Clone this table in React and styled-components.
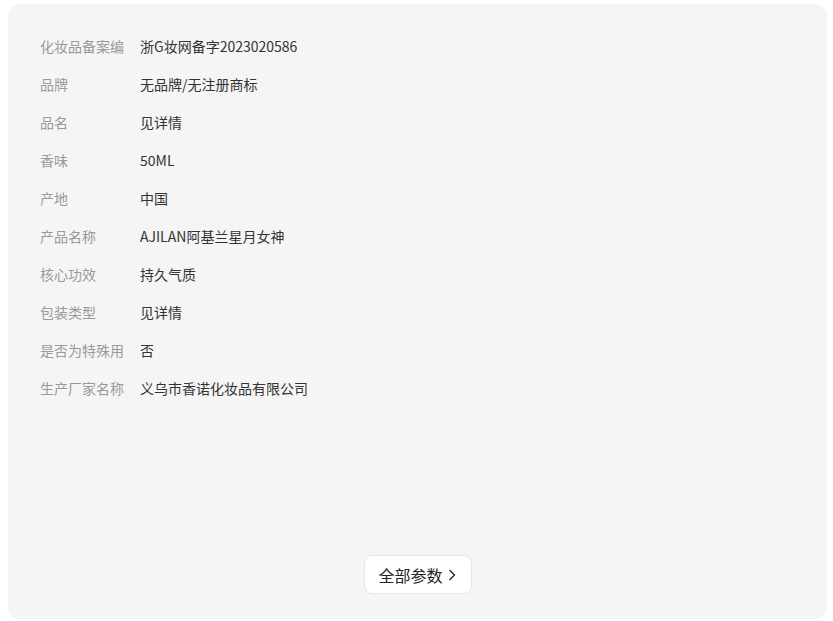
import styled, { createGlobalStyle } from "styled-components";

const GlobalStyle = createGlobalStyle`
  html, body {
    margin: 0;
    padding: 0;
    background: #ffffff;
    font-family: "Noto Sans CJK SC", "Noto Sans", sans-serif;
  }
`;

const params = [
  ["化妆品备案编", "浙G妆网备字2023020586"],
  ["品牌", "无品牌/无注册商标"],
  ["品名", "见详情"],
  ["香味", "50ML"],
  ["产地", "中国"],
  ["产品名称", "AJILAN阿基兰星月女神"],
  ["核心功效", "持久气质"],
  ["包装类型", "见详情"],
  ["是否为特殊用", "否"],
  ["生产厂家名称", "义乌市香诺化妆品有限公司"],
];

const App = () => {
  return (
    <>
      <GlobalStyle />
      <Panel>
        <ParamList>
          {params.map(([label, value]) => (
            <ParamRow key={label}>
              <Label>{label}</Label>
              <Value>{value}</Value>
            </ParamRow>
          ))}
        </ParamList>
        <Footer>
          <MoreButton>
            全部参数
            <svg width="12" height="14" viewBox="0 0 12 14" fill="none">
              <path d="M3.5 2 L8.5 7 L3.5 12" stroke="#222" strokeWidth="1.3" />
            </svg>
          </MoreButton>
        </Footer>
      </Panel>
    </>
  );
};

export default App;

const Panel = styled.div`
  box-sizing: border-box;
  margin: 4px 6px 0 8px;
  height: 615px;
  background: #f5f5f5;
  border-radius: 12px;
  padding: 23px 32px 25px;
  display: flex;
  flex-direction: column;
`;

const ParamList = styled.div`
  display: flex;
  flex-direction: column;
`;

const ParamRow = styled.div`
  display: flex;
  align-items: center;
  height: 38px;
  font-size: 14px;
`;

const Label = styled.span`
  width: 100px;
  flex-shrink: 0;
  color: #999999;
  white-space: nowrap;
`;

const Value = styled.span`
  color: #333333;
`;

const Footer = styled.div`
  margin-top: auto;
  display: flex;
  justify-content: center;
`;

const MoreButton = styled.button`
  box-sizing: border-box;
  display: flex;
  align-items: center;
  gap: 3px;
  height: 39px;
  padding: 0 13px 0 13px;
  margin-left: 1px;
  background: #ffffff;
  border: 1px solid #e6e6e6;
  border-radius: 8px;
  font-family: "Noto Sans CJK SC", "Noto Sans", sans-serif;
  font-size: 16px;
  color: #222222;
  cursor: pointer;
`;
